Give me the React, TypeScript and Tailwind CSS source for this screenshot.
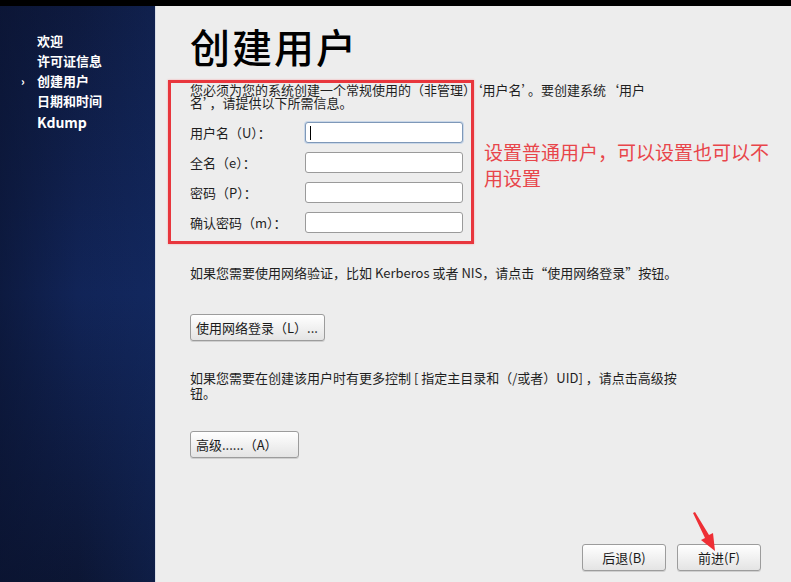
import React from 'react'

const font = { fontFamily: '"Noto Sans CJK SC", "DejaVu Sans", sans-serif' }

const navItems = ['欢迎', '许可证信息', '创建用户', '日期和时间', 'Kdump']

function Btn({ children, className = '' }: { children: React.ReactNode; className?: string }) {
  return (
    <button
      className={`h-[27px] whitespace-nowrap rounded-[3px] border border-[#9c9c9c] bg-gradient-to-b from-white to-[#e4e4e4] px-[5px] text-[13px] text-[#1a1a1a] shadow-[0_1px_0_#cfcfcf] ${className}`}
    >
      {children}
    </button>
  )
}

function Field({ label, focused }: { label: string; focused?: boolean }) {
  return (
    <div className="flex h-[30px] items-start">
      <span className="w-[115px] pt-[1px] text-[13px] leading-[20px] text-[#1f1f1f]">{label}</span>
      <div
        className={`flex h-[21px] w-[158px] items-center rounded-[3px] border bg-white pl-[4px] ${
          focused ? 'border-[#7e98b8] shadow-[0_0_0_1px_#c9d7e8]' : 'border-[#9a9a9a]'
        }`}
      >
        {focused && <span className="h-[14px] w-[1px] bg-black" />}
      </div>
    </div>
  )
}

export default function App() {
  return (
    <div className="flex h-[582px] w-[791px] flex-col overflow-hidden bg-black" style={font}>
      <div className="h-[6px] shrink-0 bg-black" />
      <div className="flex flex-1">
        {/* sidebar */}
        <aside className="relative w-[155px] shrink-0 bg-gradient-to-b from-[#0e1a3f] via-[#112457] to-[#0c1634]">
          <div className="absolute inset-0 bg-gradient-to-r from-[#0a1330]/60 via-transparent to-[#15306f]/30" />
          <ul className="relative pl-[37px] pt-[25px]">
            {navItems.map((item) => (
              <li
                key={item}
                className={`relative text-[13px] font-bold leading-[20px] text-white ${item === 'Kdump' ? 'mt-[1px] text-[14px]' : ''}`}
              >
                {item === '创建用户' && (
                  <span className="absolute left-[-16px] top-0 text-[11px] font-black leading-[20px]">›</span>
                )}
                {item}
              </li>
            ))}
          </ul>
        </aside>
        <div className="w-[1px] bg-[#d8dce6]" />

        {/* main */}
        <main className="relative flex-1 bg-[#ededed] pl-[34px] pr-[20px]">
          <h1 className="mt-[16px] text-[40px] font-medium leading-[48px] tracking-[2px] text-black">创建用户</h1>
          <p className="mt-[13px] w-[472px] text-[13px] leading-[13px] text-[#1f1f1f]">
            您必须为您的系统创建一个常规使用的（非管理）‘用户名’。要创建系统‘用户名’，请提供以下所需信息。
          </p>
          <div className="mt-[13px] flex flex-col">
            <Field label="用户名（U）：" focused />
            <Field label="全名（e）：" />
            <Field label="密码（P）：" />
            <Field label="确认密码（m）：" />
          </div>

          <p className="mt-[24px] text-[13px] leading-[14px] text-[#1f1f1f]">
            如果您需要使用网络验证，比如 Kerberos 或者 NIS，请点击“使用网络登录”按钮。
          </p>
          <Btn className="mt-[34px] w-[135px] text-left">使用网络登录（L）...</Btn>

          <p className="mt-[29px] w-[498px] text-[13px] leading-[15px] text-[#1f1f1f]">
            如果您需要在创建该用户时有更多控制 [ 指定主目录和（/或者）UID] ，请点击高级按钮。
          </p>
          <Btn className="mt-[31px] w-[109px] text-left">高级......（A）</Btn>

          <div className="absolute bottom-[11px] right-[30px] flex gap-[11px]">
            <Btn className="w-[84px] text-center">后退(B)</Btn>
            <Btn className="w-[84px] text-center">前进(F)</Btn>
          </div>

          {/* annotations */}
          <div className="absolute left-[12px] top-[74px] h-[164px] w-[306px] border-[3px] border-[#e8363d] shadow-[0_0_2px_#f6a5a8]" />
          <p className="absolute left-[328px] top-[133px] w-[295px] text-[19px] leading-[26px] text-[#e8454a]">
            设置普通用户，可以设置也可以不用设置
          </p>
          <svg className="absolute left-[530px] top-[499px]" width="40" height="50" viewBox="0 0 40 50">
            <path d="M9 7 L23 30 L27 28 L29 46 L15 35 L19 33 L7 8 Z" fill="#ee2f35" />
          </svg>
        </main>
      </div>
    </div>
  )
}
